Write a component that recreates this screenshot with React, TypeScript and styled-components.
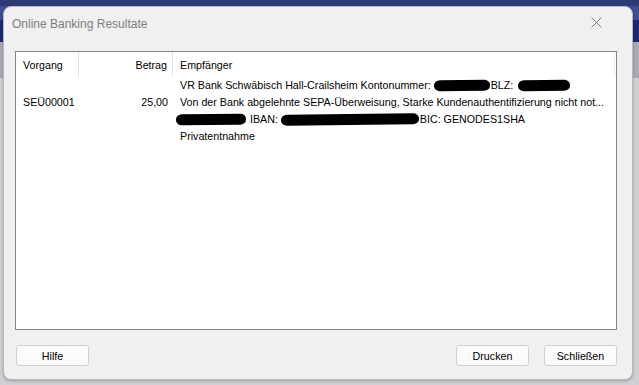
import React from 'react';
import styled, { createGlobalStyle } from 'styled-components';

const GlobalStyle = createGlobalStyle`
	html, body {
		margin: 0;
		padding: 0;
	}
	body {
		font-family: 'Liberation Sans', Arial, sans-serif;
	}
`;

const Desktop = styled.div`
	width: 639px;
	height: 385px;
	box-sizing: border-box;
	padding: 6px 6px 5px 3px;
	display: flex;
	background:
		linear-gradient(to bottom, #2d3a78 0, #2d3a78 6px, transparent 6px),
		linear-gradient(to bottom, #3f4e92 0, #3f4e92 20px, #1d2670 20px, #1d2670 42px, #a9a9ba 42px, #a9a9ba 78px, #cfcfd4 78px);
`;

const Dialog = styled.div`
	flex: 1;
	display: flex;
	flex-direction: column;
	background: #f0f0f0;
	border: 1px solid #b9b9b9;
	border-radius: 8px;
	box-shadow: 0 1px 3px rgba(0, 0, 0, 0.25);
	overflow: hidden;
`;

const TitleBar = styled.div`
	height: 32px;
	display: flex;
	align-items: center;
	justify-content: space-between;
	padding: 0 30px 0 8px;
`;

const Title = styled.span`
	font-family: 'Liberation Sans', Arial, sans-serif;
	font-size: 12px;
	color: #7e7e7e;
	margin-top: 1px;
`;

const CloseIcon = styled.svg`
	width: 11px;
	height: 11px;
	margin-top: -2px;
`;

const ListBox = styled.div`
	margin: 12px 15px 0 11px;
	flex: 1;
	background: #fff;
	border: 1px solid #858585;
	display: grid;
	grid-template-columns: 63px 94px 442px;
	grid-template-rows: 25px;
	grid-auto-rows: 17px;
	align-content: start;
	font-size: 10.7px;
	color: #000;
`;

const HeadCell = styled.div<{ $right?: boolean; $last?: boolean }>`
	display: flex;
	align-items: center;
	justify-content: ${p => (p.$right ? 'flex-end' : 'flex-start')};
	padding: ${p => (p.$right ? '1px 5px 0 0' : '1px 0 0 7px')};
	border-right: 1px solid ${p => (p.$last ? '#eeeeee' : '#e3e3e3')};
	box-sizing: border-box;
	color: #000;
`;

const Cell = styled.div<{ $right?: boolean }>`
	display: flex;
	align-items: center;
	justify-content: ${p => (p.$right ? 'flex-end' : 'flex-start')};
	padding: ${p => (p.$right ? '0 5px 0 0' : '0 0 0 7px')};
	white-space: nowrap;
	overflow: hidden;
	line-height: 17px;
`;

const Redact = styled.span<{ $w: number; $shift?: number }>`
	display: inline-block;
	width: ${p => p.$w}px;
	height: 11px;
	background: #000;
	border-radius: 6px / 5px;
	margin-left: ${p => p.$shift || 0}px;
	margin-right: 1px;
	transform: rotate(-0.6deg);
`;

const Footer = styled.div`
	display: flex;
	align-items: center;
	padding: 15px 15px 13px 12px;
	gap: 15px;
`;

const Button = styled.button<{ $push?: boolean }>`
	width: 73px;
	height: 21px;
	margin-left: ${p => (p.$push ? 'auto' : '0')};
	background: #fbfbfb;
	border: 1px solid #cfcfcf;
	border-radius: 3px;
	font-family: 'Liberation Sans', Arial, sans-serif;
	font-size: 10.7px;
	color: #000;
	padding: 0;
`;

export default function App() {
	return (
		<>
			<GlobalStyle />
			<Desktop>
				<Dialog>
					<TitleBar>
						<Title>Online Banking Resultate</Title>
						<CloseIcon viewBox="0 0 11 11">
							<path d="M0.5 0.5 L10.5 10.5 M10.5 0.5 L0.5 10.5" stroke="#7a7a7a" strokeWidth="1" fill="none" />
						</CloseIcon>
					</TitleBar>
					<ListBox>
						<HeadCell>Vorgang</HeadCell>
						<HeadCell $right>Betrag</HeadCell>
						<HeadCell $last>Empfänger</HeadCell>

						<Cell />
						<Cell $right />
						<Cell>
							VR Bank Schwäbisch Hall-Crailsheim Kontonummer:&nbsp;<Redact $w={56} />BLZ:&nbsp;<Redact $w={52} $shift={2} />
						</Cell>

						<Cell>SEÜ00001</Cell>
						<Cell $right>25,00</Cell>
						<Cell>Von der Bank abgelehnte SEPA-Überweisung, Starke Kundenauthentifizierung nicht not...</Cell>

						<Cell />
						<Cell $right />
						<Cell>
							<Redact $w={70} $shift={-4} />&nbsp;IBAN:&nbsp;<Redact $w={138} />BIC: GENODES1SHA
						</Cell>

						<Cell />
						<Cell $right />
						<Cell>Privatentnahme</Cell>
					</ListBox>
					<Footer>
						<Button>Hilfe</Button>
						<Button $push>Drucken</Button>
						<Button>Schließen</Button>
					</Footer>
				</Dialog>
			</Desktop>
		</>
	);
}
